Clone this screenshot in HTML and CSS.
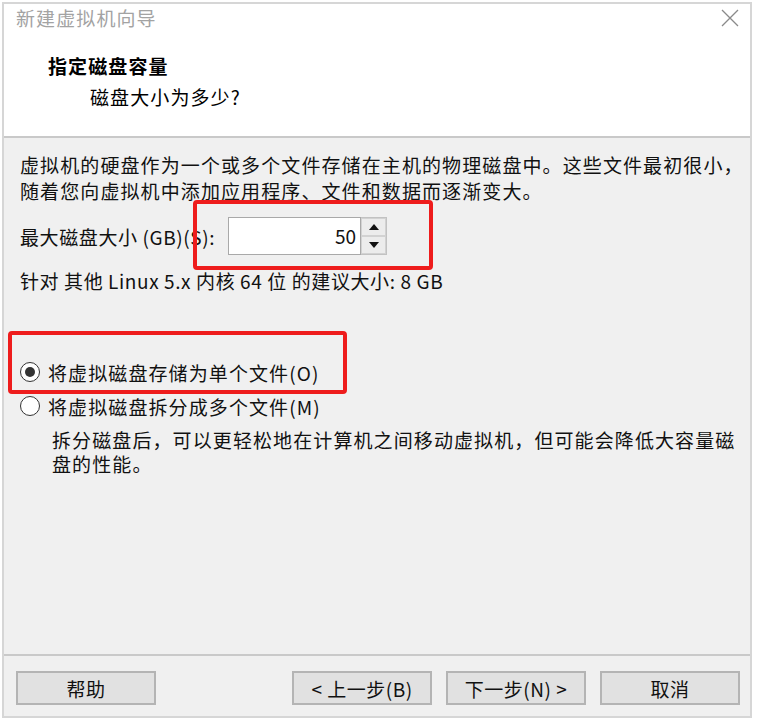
FILE: index.html
```html
<!DOCTYPE html>
<html lang="zh-CN">
<head>
<meta charset="utf-8">
<title>新建虚拟机向导</title>
<link rel="stylesheet" href="styles.css">
</head>
<body>
<div class="window">
  <div class="header">
    <div class="titlebar">
      <span class="title">新建虚拟机向导</span>
      <svg class="close" width="20" height="20" viewBox="0 0 20 20"><path d="M2 2 L18 18 M18 2 L2 18" stroke="#8a8a8a" stroke-width="1.3" fill="none"/></svg>
    </div>
    <div class="heading">指定磁盘容量</div>
    <div class="subheading">磁盘大小为多少?</div>
  </div>
  <div class="content">
    <p class="intro">虚拟机的硬盘作为一个或多个文件存储在主机的物理磁盘中。这些文件最初很小，<br>随着您向虚拟机中添加应用程序、文件和数据而逐渐变大。</p>
    <div class="size-row">
      <span class="label">最大磁盘大小 (GB)(S):</span>
      <div class="spin">
        <div class="spin-input">50</div>
        <div class="spin-btns">
          <div class="spin-btn"><svg width="10" height="6" viewBox="0 0 10 6"><path d="M0 6 L5 0 L10 6 Z" fill="#111"/></svg></div>
          <div class="spin-btn"><svg width="10" height="6" viewBox="0 0 10 6"><path d="M0 0 L5 6 L10 0 Z" fill="#111"/></svg></div>
        </div>
      </div>
    </div>
    <p class="recommend">针对 其他 Linux 5.x 内核 64 位 的建议大小: 8 GB</p>
    <div class="options">
      <div class="radio-row"><span class="radio checked"></span><span>将虚拟磁盘存储为单个文件(O)</span></div>
      <div class="radio-row"><span class="radio"></span><span>将虚拟磁盘拆分成多个文件(M)</span></div>
      <p class="desc">拆分磁盘后，可以更轻松地在计算机之间移动虚拟机，但可能会降低大容量磁<br>盘的性能。</p>
    </div>
  </div>
  <div class="footer">
    <button class="btn">帮助</button>
    <div class="spacer"></div>
    <button class="btn">&lt; 上一步(B)</button>
    <button class="btn">下一步(N) &gt;</button>
    <button class="btn">取消</button>
  </div>
  <div class="mark mark-size"></div>
  <div class="mark mark-radio"></div>
</div>
</body>
</html>
```

FILE: styles.css
```css
* { box-sizing: border-box; }
html, body { margin: 0; padding: 0; background: #fff; }
body {
  font-family: "Noto Sans CJK SC", "Noto Sans", sans-serif;
  font-size: 19px;
  letter-spacing: 1.1px;
  color: #111;
  padding: 2px;
}
p { margin: 0; }
.window {
  position: relative;
  width: 750px;
  height: 716px;
  border: 2px solid #d6d6d6;
  background: #f0f0f0;
  display: flex;
  flex-direction: column;
}
.header {
  background: #fff;
  height: 134px;
  border-bottom: 2px solid #c9c9c9;
  padding-left: 12px;
}
.titlebar {
  height: 28px;
  display: flex;
  align-items: center;
  justify-content: space-between;
  padding-right: 10px;
}
.title { color: #a3a3a3; line-height: 28px; }
.heading {
  margin-top: 20px;
  padding-left: 32px;
  font-weight: bold;
  line-height: 28px;
  color: #000;
}
.subheading {
  margin-top: 3px;
  padding-left: 74px;
  line-height: 28px;
  color: #000;
}
.content {
  flex: 1;
  padding: 14px 0 0 16px;
}
.intro { line-height: 26px; white-space: nowrap; }
.size-row {
  margin-top: 13px;
  display: flex;
  align-items: center;
  height: 38px;
}
.label { width: 208px; letter-spacing: 0.6px; }
.spin {
  display: flex;
  height: 38px;
}
.spin-input {
  width: 133px;
  height: 38px;
  background: #fff;
  border: 1px solid #a9a9a9;
  text-align: right;
  padding-right: 4px;
  line-height: 36px;
  letter-spacing: 0;
}
.spin-btns {
  width: 26px;
  display: flex;
  flex-direction: column;
  border: 1px solid #c2c2c2;
  border-left: none;
}
.spin-btn {
  flex: 1;
  background: #ececec;
  display: flex;
  align-items: center;
  justify-content: center;
  border: 1px solid #d2d2d2;
}
.recommend {
  margin-top: 13px;
  line-height: 26px;
  letter-spacing: 0.6px;
}
.options { margin-top: 61px; }
.radio-row {
  height: 34px;
  display: flex;
  align-items: center;
}
.radio {
  width: 20px;
  height: 20px;
  border-radius: 50%;
  border: 1.5px solid #333;
  background: #fff;
  margin-right: 8px;
  display: flex;
  align-items: center;
  justify-content: center;
}
.radio.checked::after {
  content: "";
  width: 10px;
  height: 10px;
  border-radius: 50%;
  background: #333;
}
.desc {
  margin-top: 5px;
  padding-left: 32px;
  line-height: 24px;
  white-space: nowrap;
}
.footer {
  height: 62px;
  border-top: 2px solid #c9c9c9;
  display: flex;
  align-items: flex-start;
  padding: 15px 10px 0 12px;
  gap: 14px;
}
.spacer { flex: 1; }
.btn {
  width: 140px;
  height: 34px;
  background: #e1e1e1;
  border: 2px solid #b4b4b4;
  font-family: inherit;
  font-size: 19px;
  letter-spacing: 0.5px;
  color: #111;
  padding: 0;
}
.mark {
  position: absolute;
  border: 4px solid #ee1c1c;
  border-radius: 4px;
}
.mark-size { left: 189px; top: 196px; width: 240px; height: 70px; }
.mark-radio { left: 4px; top: 327px; width: 339px; height: 63px; }
```
